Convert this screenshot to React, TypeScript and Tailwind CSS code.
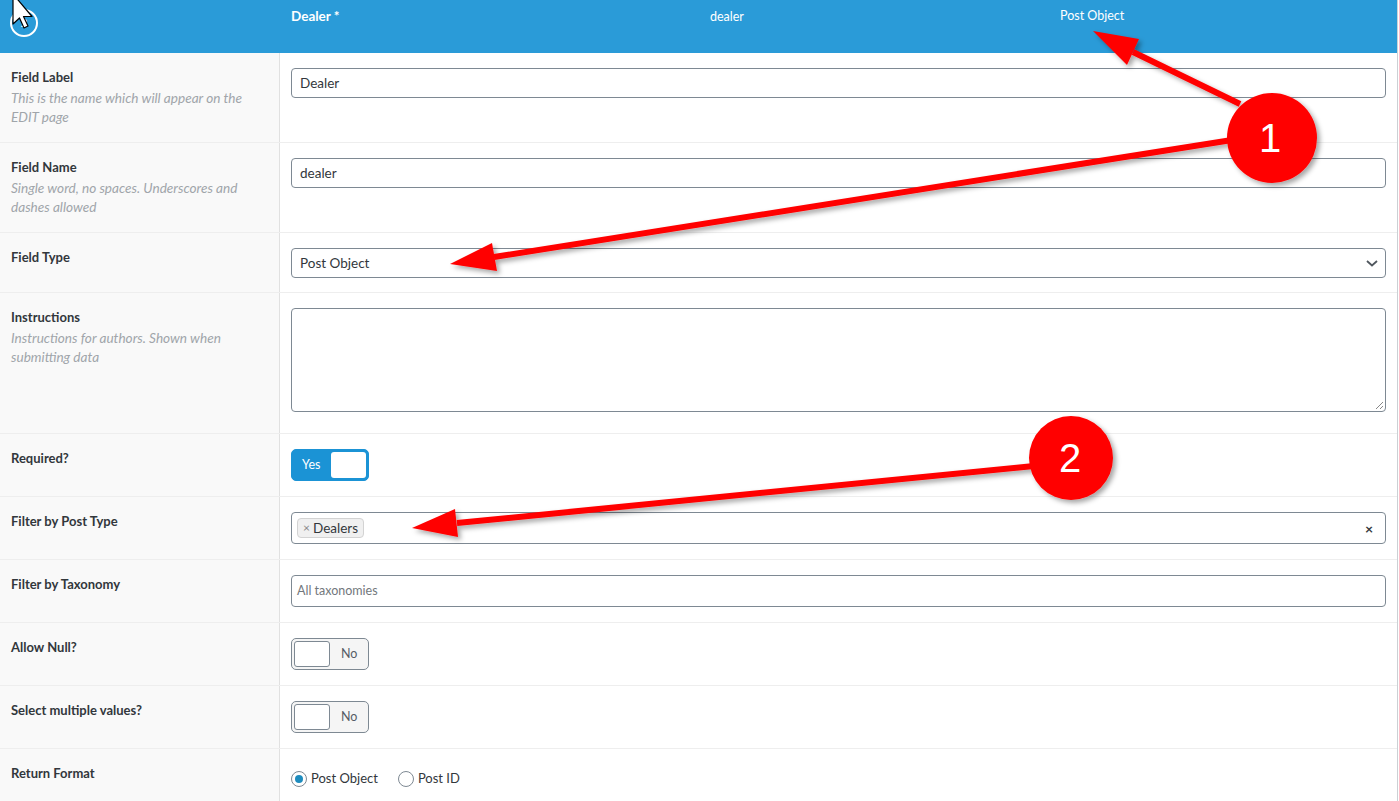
import type { ReactNode } from "react"

const font = "font-['Lato','Liberation_Sans',sans-serif]"

function Row({ label, desc, first, children, pb = "pb-[15px]" }: { label: string; desc?: string[]; first?: boolean; children: ReactNode; pb?: string }) {
  return (
    <div className={`flex ${first ? "" : "border-t border-[#eeeeee]"}`}>
      <div className="w-[280px] shrink-0 bg-[#f9f9f9] border-r border-[#e1e1e1] px-[11px] pt-[15px] pb-[15px]">
        <div className="text-[13px] leading-[18px] font-bold text-[#32373c]">{label}</div>
        {desc && (
          <div className="mt-[3px] text-[13.6px] leading-[19px] italic text-[#a0a5aa]">
            {desc.map((d) => (
              <div key={d}>{d}</div>
            ))}
          </div>
        )}
      </div>
      <div className={`flex-1 px-[11px] pt-[15px] ${pb}`}>{children}</div>
    </div>
  )
}

function TextInput({ value, placeholder }: { value?: string; placeholder?: string }) {
  return (
    <div className="h-[30px] border border-[#7e8993] rounded-[4px] bg-white flex items-center px-[8px] text-[13.5px] text-[#32373c]">
      {value ?? <span className="text-[#72777c] text-[12.5px] -ml-[2px]">{placeholder}</span>}
    </div>
  )
}

function Toggle({ on }: { on?: boolean }) {
  if (on) {
    return (
      <div className="w-[78px] h-[32px] rounded-[5px] bg-[#1b93d5] border border-[#1b93d5] flex items-center pl-[10px] pr-[2px] justify-between">
        <span className="text-white text-[12.5px]">Yes</span>
        <div className="w-[35px] h-[26px] bg-white rounded-[3px]" />
      </div>
    )
  }
  return (
    <div className="w-[78px] h-[32px] rounded-[5px] bg-[#f5f5f5] border border-[#7e8993] flex items-center pl-[2px] gap-[11px]">
      <div className="w-[36px] h-[26px] bg-white rounded-[3px] border border-[#7e8993]" />
      <span className="text-[#555d66] text-[12.5px]">No</span>
    </div>
  )
}

function Radio({ checked, label }: { checked?: boolean; label: string }) {
  return (
    <div className="flex items-center gap-[4px] text-[13px] text-[#32373c]">
      <div className="w-[16px] h-[16px] rounded-full border border-[#7e8993] bg-white flex items-center justify-center">
        {checked && <div className="w-[8px] h-[8px] rounded-full bg-[#1e8cbe]" />}
      </div>
      {label}
    </div>
  )
}

function Arrows() {
  const arrows = [
    { from: [1240, 104], base: [1133, 52], p1: [1139, 39], p2: [1127, 65], tip: [1093, 31] },
    { from: [1232, 140], base: [494, 257], p1: [497, 271], p2: [492, 243], tip: [450, 264] },
    { from: [1034, 466], base: [457, 523], p1: [458, 537], p2: [455, 509], tip: [412, 528] },
  ]
  return (
    <svg className="absolute inset-0 pointer-events-none" width="1399" height="801" viewBox="0 0 1399 801">
      <defs>
        <filter id="sh" x="-20%" y="-20%" width="140%" height="140%">
          <feDropShadow dx="3" dy="3" stdDeviation="2.5" floodColor="#000" floodOpacity="0.35" />
        </filter>
      </defs>
      <g filter="url(#sh)">
        {arrows.map((a, i) => (
          <g key={i}>
            <line x1={a.from[0]} y1={a.from[1]} x2={a.base[0]} y2={a.base[1]} stroke="#ff0000" strokeWidth="6" />
            <polygon points={`${a.tip[0]},${a.tip[1]} ${a.p1[0]},${a.p1[1]} ${a.p2[0]},${a.p2[1]}`} fill="#ff0000" />
          </g>
        ))}
        <circle cx="1272" cy="138" r="45" fill="#ff0000" />
        <circle cx="1071" cy="458" r="42" fill="#ff0000" />
      </g>
      <text x="1270" y="152" textAnchor="middle" fill="#fff" fontSize="40" fontFamily="Liberation Sans, Arial, sans-serif">1</text>
      <text x="1070" y="472" textAnchor="middle" fill="#fff" fontSize="40" fontFamily="Liberation Sans, Arial, sans-serif">2</text>
      <polygon points="13,-6 13,24 19.5,18 24,28 28,26 23.5,16.5 32,16.5" fill="#fff" stroke="#000" strokeWidth="1.2" strokeLinejoin="round" />
    </svg>
  )
}

export default function App() {
  return (
    <div className={`relative w-[1399px] h-[801px] overflow-hidden bg-white ${font}`}>
      <div className="w-[1398px] border-r border-[#ccd0d4] h-full">
        <div className="h-[53px] bg-[#2a9bd8] flex text-white">
          <div className="w-[280px] pl-[10px] pt-[9px]">
            <div className="w-[28px] h-[28px] rounded-full border-2 border-white flex items-center justify-center text-[12px] leading-none">2</div>
          </div>
          <div className="w-[430px] pl-[11px] pt-[7px] text-[13.5px] leading-[18px] font-bold">Dealer *</div>
          <div className="w-[350px] pt-[8px] text-[12.5px] leading-[18px]">dealer</div>
          <div className="flex-1 pt-[7px] text-[12.5px] leading-[18px]">Post Object</div>
        </div>

        <Row first label="Field Label" desc={["This is the name which will appear on the", "EDIT page"]}>
          <TextInput value="Dealer" />
        </Row>
        <Row label="Field Name" desc={["Single word, no spaces. Underscores and", "dashes allowed"]}>
          <TextInput value="dealer" />
        </Row>
        <Row label="Field Type" pb="pb-[14px]">
          <div className="h-[30px] border border-[#7e8993] rounded-[4px] bg-white flex items-center justify-between pl-[8px] pr-[6px] text-[13.5px] text-[#32373c]">
            Post Object
            <svg width="14" height="14" viewBox="0 0 14 14">
              <path d="M2 5l5 4.5L12 5" fill="none" stroke="#50575e" strokeWidth="1.8" />
            </svg>
          </div>
        </Row>
        <Row label="Instructions" desc={["Instructions for authors. Shown when", "submitting data"]} pb="pb-[21px]">
          <div className="relative h-[104px] border border-[#7e8993] rounded-[4px] bg-white">
            <svg className="absolute right-[1px] bottom-[1px]" width="9" height="9" viewBox="0 0 9 9">
              <path d="M8 1L1 8M8 5L5 8" stroke="#888" strokeWidth="1" />
            </svg>
          </div>
        </Row>
        <Row label="Required?">
          <Toggle on />
        </Row>
        <Row label="Filter by Post Type">
          <div className="h-[32px] border border-[#7e8993] rounded-[4px] bg-white flex items-center justify-between pl-[5px] pr-[12px]">
            <div className="flex items-center gap-[3px] h-[20px] px-[5px] rounded-[4px] bg-[#f0f0f0] border border-[#d3d3d3] text-[13.5px] text-[#32373c]">
              <span className="text-[#888] text-[12px]">×</span>
              Dealers
            </div>
            <span className="text-[#32373c] text-[14px] font-bold">×</span>
          </div>
        </Row>
        <Row label="Filter by Taxonomy">
          <div className="h-[32px] border border-[#7e8993] rounded-[4px] bg-white flex items-center px-[5px] text-[12.5px] text-[#72777c]">All taxonomies</div>
        </Row>
        <Row label="Allow Null?">
          <Toggle />
        </Row>
        <Row label="Select multiple values?">
          <Toggle />
        </Row>
        <Row label="Return Format">
          <div className="flex gap-[20px] pt-[5px]">
            <Radio checked label="Post Object" />
            <Radio label="Post ID" />
          </div>
        </Row>
      </div>
      <Arrows />
    </div>
  )
}
